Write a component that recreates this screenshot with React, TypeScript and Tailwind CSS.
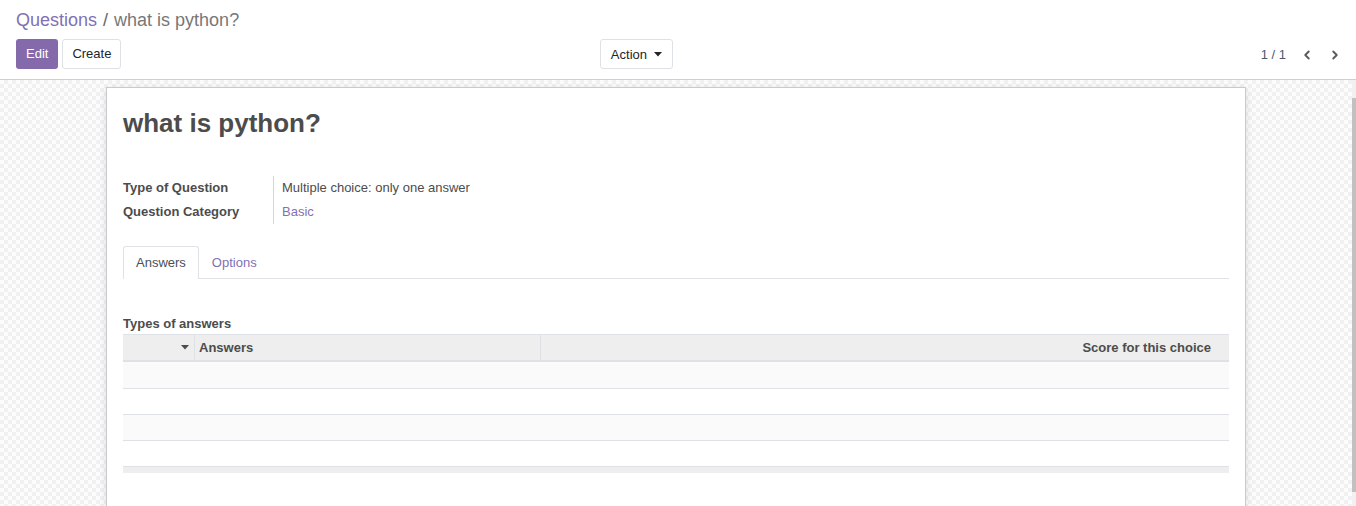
import { ChevronLeft, ChevronRight } from 'lucide-react';

const rows = [0, 1, 2, 3];

function Caret({ className }: { className?: string }) {
    return (
        <svg width="8" height="5" viewBox="0 0 8 5" className={className}>
            <path d="M0 0 L8 0 L4 4.5 Z" fill="currentColor" />
        </svg>
    );
}

export default function App() {
    return (
        <div className="w-[1356px] h-[506px] overflow-hidden flex flex-col bg-white text-[13px] text-[#4c4c4c] font-['Liberation_Sans',Arial,sans-serif]">
            {/* control panel */}
            <div className="px-4 pt-[7px] pb-[10px] border-b border-[#cfcfcf] bg-white">
                <div className="h-[26px] leading-[26px] text-[18px] whitespace-nowrap">
                    <span className="text-[#7f71b5]">Questions</span>
                    <span className="text-[#666] mx-[6px]">/</span>
                    <span className="text-[#777]">what is python?</span>
                </div>
                <div className="mt-[6px] flex h-[30px]">
                    <div className="w-1/2 flex justify-between pr-[5px]">
                        <div className="flex gap-1">
                            <button className="h-[30px] px-[10px] rounded-[3px] bg-[#8469ab] text-white">Edit</button>
                            <button className="h-[30px] px-[9px] rounded-[3px] bg-white border border-[#dee2e6] text-[#212529]">Create</button>
                        </div>
                        <button className="h-[30px] px-[10px] pt-px rounded-[3px] bg-white border border-[#dee2e6] text-[#212529] flex items-center gap-[7px]">
                            Action
                            <Caret />
                        </button>
                    </div>
                    <div className="flex-1 flex justify-end items-center pt-px -mr-[2px]">
                        <span className="text-[#4a5a6e]">1 / 1</span>
                        <div className="flex items-center ml-[14px] gap-[14px] text-[#5a5a5a]">
                            <ChevronLeft size={14} strokeWidth={3.2} />
                            <ChevronRight size={14} strokeWidth={3.2} />
                        </div>
                    </div>
                </div>
            </div>

            {/* content */}
            <div className="flex-1 flex min-h-0">
                <div className="flex-1 pt-[7px] bg-[repeating-conic-gradient(#f1f1f1_0%_25%,#fcfcfc_0%_50%)] bg-[length:8px_8px]">
                    <div className="mx-auto w-[1140px] h-full bg-white border border-b-0 border-[#c9c9cf] shadow-[0_2px_8px_rgba(0,0,0,0.12)] px-4 pt-[20px]">
                        <h1 className="text-[26px] leading-[30px] font-bold text-[#4c4c4c]">what is python?</h1>

                        <div className="mt-[38px] w-[500px]">
                            <div className="flex h-[24px] items-center">
                                <div className="w-[151px] h-full flex items-center font-bold border-r border-[#d6d6d6]">Type of Question</div>
                                <div className="pl-2">Multiple choice: only one answer</div>
                            </div>
                            <div className="flex h-[24px] items-center">
                                <div className="w-[151px] h-full flex items-center font-bold border-r border-[#d6d6d6]">Question Category</div>
                                <div className="pl-2 text-[#7f71b5]">Basic</div>
                            </div>
                        </div>

                        <div className="mt-[22px] flex border-b border-[#dee2e6] h-[33px]">
                            <div className="h-[33px] px-3 flex items-center border border-b-0 border-[#dee2e6] rounded-t-[3px] bg-white text-[#495057] -mb-px">Answers</div>
                            <div className="h-[33px] pt-px px-[13px] flex items-center text-[#7f71b5]">Options</div>
                        </div>

                        <div className="mt-[35px] h-[20px] leading-[20px] font-bold">Types of answers</div>
                        <div className="h-[28px] flex bg-[#eeeeee] border-t border-b-2 border-[#dee2e6] font-bold">
                            <div className="w-[72px] flex items-center justify-end pr-[5px] border-r border-[#dee2e6] text-[#4c4c4c]">
                                <Caret />
                            </div>
                            <div className="w-[346px] flex items-center pl-[4px] border-r border-[#dee2e6]">Answers</div>
                            <div className="flex-1 flex items-center justify-end pr-[18px]">Score for this choice</div>
                        </div>
                        {rows.map((r) => (
                            <div
                                key={r}
                                className={`h-[26px] ${r > 0 ? 'border-t border-[#dee2e6]' : ''} ${r % 2 === 0 ? 'bg-[#fafafa]' : 'bg-white'}`}
                            />
                        ))}
                        <div className="h-[7px] border-t border-[#dee2e6] bg-[#eeeeee]" />
                    </div>
                </div>
                {/* scrollbar */}
                <div className="w-[4px] flex flex-col bg-[#f1f1f1]">
                    <div className="h-[18px]" />
                    <div className="flex-1 bg-[#c1c1c1]" />
                    <div className="h-[14px]" />
                </div>
            </div>
        </div>
    );
}
